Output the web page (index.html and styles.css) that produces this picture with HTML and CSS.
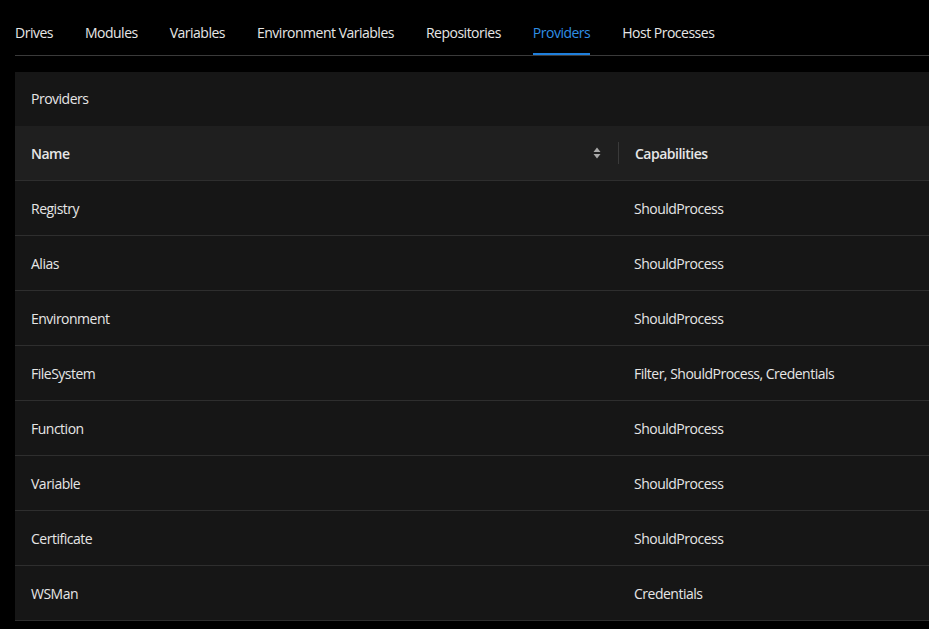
FILE: index.html
```html
<!DOCTYPE html>
<html>
<head>
<meta charset="utf-8">
<link rel="stylesheet" href="styles.css">
</head>
<body>
<nav class="tabs">
  <div class="tab">Drives</div>
  <div class="tab">Modules</div>
  <div class="tab">Variables</div>
  <div class="tab">Environment Variables</div>
  <div class="tab">Repositories</div>
  <div class="tab active">Providers</div>
  <div class="tab">Host Processes</div>
</nav>
<section class="card">
  <div class="card-title">Providers</div>
  <div class="table">
    <div class="row head">
      <div class="cell name">Name
        <svg class="sort" width="8" height="12" viewBox="0 0 8 12"><path d="M4 0.5 L7.5 5 H0.5 Z M4 11.5 L7.5 7 H0.5 Z" fill="#a8a8a8"/></svg>
      </div>
      <div class="cell caps">Capabilities</div>
    </div>
    <div class="row"><div class="cell name">Registry</div><div class="cell caps">ShouldProcess</div></div>
    <div class="row"><div class="cell name">Alias</div><div class="cell caps">ShouldProcess</div></div>
    <div class="row"><div class="cell name">Environment</div><div class="cell caps">ShouldProcess</div></div>
    <div class="row"><div class="cell name">FileSystem</div><div class="cell caps">Filter, ShouldProcess, Credentials</div></div>
    <div class="row"><div class="cell name">Function</div><div class="cell caps">ShouldProcess</div></div>
    <div class="row"><div class="cell name">Variable</div><div class="cell caps">ShouldProcess</div></div>
    <div class="row"><div class="cell name">Certificate</div><div class="cell caps">ShouldProcess</div></div>
    <div class="row"><div class="cell name">WSMan</div><div class="cell caps">Credentials</div></div>
  </div>
</section>
</body>
</html>
```
FILE: styles.css
```css
html, body {
  margin: 0;
  padding: 0;
  background: #000;
  overflow: hidden;
}
body {
  width: 929px;
  height: 629px;
  box-sizing: border-box;
  font-family: "Open Sans", "Liberation Sans", sans-serif;
  font-size: 14px;
  color: #e6e6e6;
  padding-left: 15px;
}
.tabs {
  display: flex;
  gap: 32px;
  height: 56px;
  border-bottom: 1px solid #3a3a3a;
  box-sizing: border-box;
  padding-top: 22px;
}
.tab {
  height: 33px;
  box-sizing: border-box;
  line-height: 22px;
  letter-spacing: -0.5px;
}
.tab.active {
  color: #2f8fe6;
  border-bottom: 2px solid #1f7fdc;
}
.card {
  margin-top: 16px;
  width: 914px;
  background: #161616;
}
.card-title {
  height: 54px;
  line-height: 54px;
  padding-left: 16px;
  letter-spacing: -0.5px;
}
.row {
  display: flex;
  height: 55px;
  border-bottom: 1px solid #2e2e2e;
  box-sizing: border-box;
  align-items: center;
}
.row.head {
  background: #1f1f1f;
  font-weight: 600;
  height: 55px;
}
.cell {
  padding-left: 16px;
  letter-spacing: -0.5px;
  box-sizing: border-box;
}
.cell.name {
  width: 603px;
  display: flex;
  align-items: center;
  height: 100%;
}
.cell.caps {
  height: 100%;
  display: flex;
  align-items: center;
}
.head .cell.caps {
  border-left: 1px solid #3a3a3a;
  height: 22px;
}
.sort {
  margin-left: auto;
  margin-right: 17px;
}
```
